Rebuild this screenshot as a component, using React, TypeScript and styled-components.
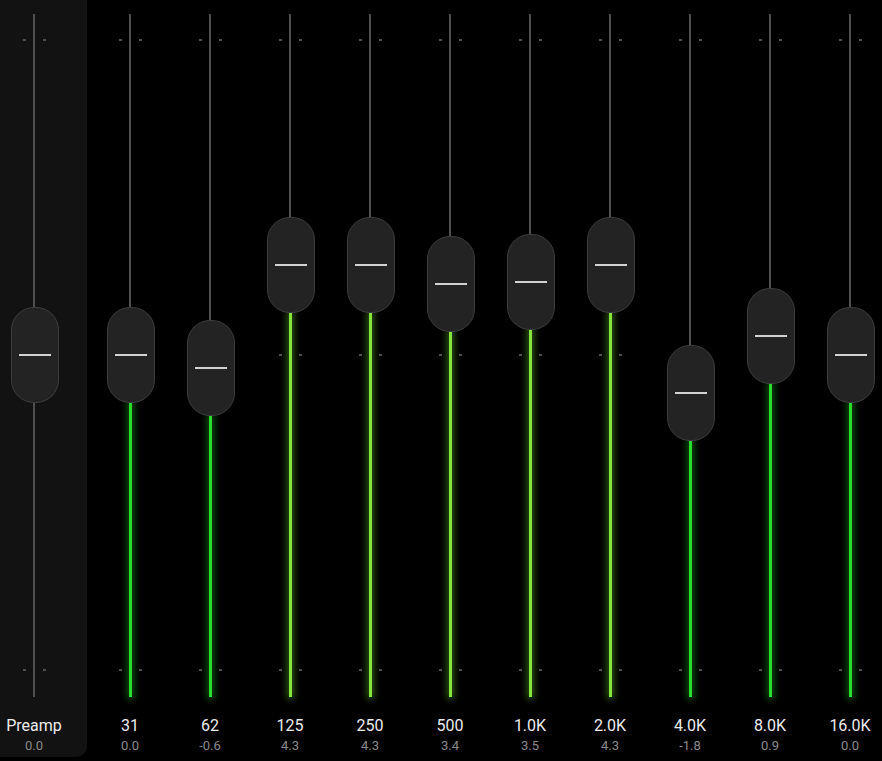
import styled, { createGlobalStyle } from "styled-components";

const GlobalStyle = createGlobalStyle`
    html, body {
        margin: 0;
        padding: 0;
        background: #000;
        overflow: hidden;
    }
    body {
        font-family: Roboto, "Noto Sans", sans-serif;
    }
`;

const TRACK_TOP = 14;
const TRACK_HEIGHT = 683;
const CENTER = 341; // 0 dB inside the track
const PX_PER_DB = 20.97;
const KNOB_H = 96;

type Band = { label: string; value: number };

const bands: Band[] = [
    { label: "31", value: 0.0 },
    { label: "62", value: -0.6 },
    { label: "125", value: 4.3 },
    { label: "250", value: 4.3 },
    { label: "500", value: 3.4 },
    { label: "1.0K", value: 3.5 },
    { label: "2.0K", value: 4.3 },
    { label: "4.0K", value: -1.8 },
    { label: "8.0K", value: 0.9 },
    { label: "16.0K", value: 0.0 },
];

const Wrapper = styled.div`
    display: flex;
    width: 882px;
    height: 761px;
    background: #000;
`;

const PreampPanel = styled.div`
    width: 87px;
    height: 757px;
    background: #121212;
    border-bottom-right-radius: 11px;
    display: flex;
    flex-shrink: 0;
`;

const Bands = styled.div`
    display: flex;
    gap: 16px;
    padding-left: 11px;
`;

const Column = styled.div<{ $width: number }>`
    width: ${(p) => p.$width}px;
    display: flex;
    flex-direction: column;
    align-items: center;
    padding-top: ${TRACK_TOP}px;
`;

const TrackArea = styled.div`
    position: relative;
    width: 100%;
    height: ${TRACK_HEIGHT}px;
`;

const Track = styled.div`
    position: absolute;
    left: 50%;
    top: 0;
    bottom: 0;
    width: 2px;
    margin-left: -1px;
    background: #4f4f4f;
`;

const Fill = styled.div<{ $color: string; $glow: string }>`
    position: absolute;
    left: 50%;
    bottom: 0;
    width: 3px;
    margin-left: -1.5px;
    background: ${(p) => p.$color};
    box-shadow: 0 0 7px 2px ${(p) => p.$glow};
`;

const Tick = styled.div<{ $side: "left" | "right" }>`
    position: absolute;
    width: 3px;
    height: 2px;
    margin-top: -1px;
    background: #4e4e4e;
    left: ${(p) => (p.$side === "left" ? "calc(50% - 11px)" : "calc(50% + 9px)")};
`;

const Knob = styled.div`
    position: absolute;
    left: 50%;
    width: 48px;
    height: ${KNOB_H}px;
    margin-left: -23.5px;
    box-sizing: border-box;
    background: #232323;
    border: 1px solid #3d3d3d;
    border-radius: 23px;
    display: flex;
    align-items: center;
    justify-content: center;
`;

const KnobLine = styled.div`
    width: 32px;
    height: 2px;
    background: #d2d2d2;
`;

const Label = styled.div`
    margin-top: 19px;
    font-size: 16px;
    line-height: 20px;
    color: #ececec;
    white-space: nowrap;
`;

const Value = styled.div`
    margin-top: 2px;
    font-size: 13px;
    line-height: 15px;
    color: #8a8a8a;
`;

function Slider({ value, fill }: { value: number; fill: boolean }) {
    const knobCenter = CENTER - value * PX_PER_DB;
    const knobTop = knobCenter - KNOB_H / 2;
    const lime = value >= 3;
    const color = lime ? "#84e63c" : "#28dc2e";
    const glow = lime ? "rgba(132, 230, 60, 0.4)" : "rgba(40, 220, 46, 0.4)";
    const ticks = [CENTER - 15 * PX_PER_DB, CENTER, CENTER + 15 * PX_PER_DB];

    return (
        <TrackArea>
            <Track />
            {ticks.map((y) => (
                <span key={y}>
                    <Tick $side="left" style={{ top: y }} />
                    <Tick $side="right" style={{ top: y }} />
                </span>
            ))}
            {fill && (
                <Fill
                    $color={color}
                    $glow={glow}
                    style={{ height: TRACK_HEIGHT - (knobTop + KNOB_H) + 1 }}
                />
            )}
            <Knob style={{ top: knobTop }}>
                <KnobLine />
            </Knob>
        </TrackArea>
    );
}

function App() {
    return (
        <Wrapper>
            <GlobalStyle />
            <PreampPanel>
                <Column $width={68}>
                    <Slider value={0} fill={false} />
                    <Label>Preamp</Label>
                    <Value>0.0</Value>
                </Column>
            </PreampPanel>
            <Bands>
                {bands.map((b) => (
                    <Column $width={64} key={b.label}>
                        <Slider value={b.value} fill={true} />
                        <Label>{b.label}</Label>
                        <Value>{b.value.toFixed(1)}</Value>
                    </Column>
                ))}
            </Bands>
        </Wrapper>
    );
}

export default App;
